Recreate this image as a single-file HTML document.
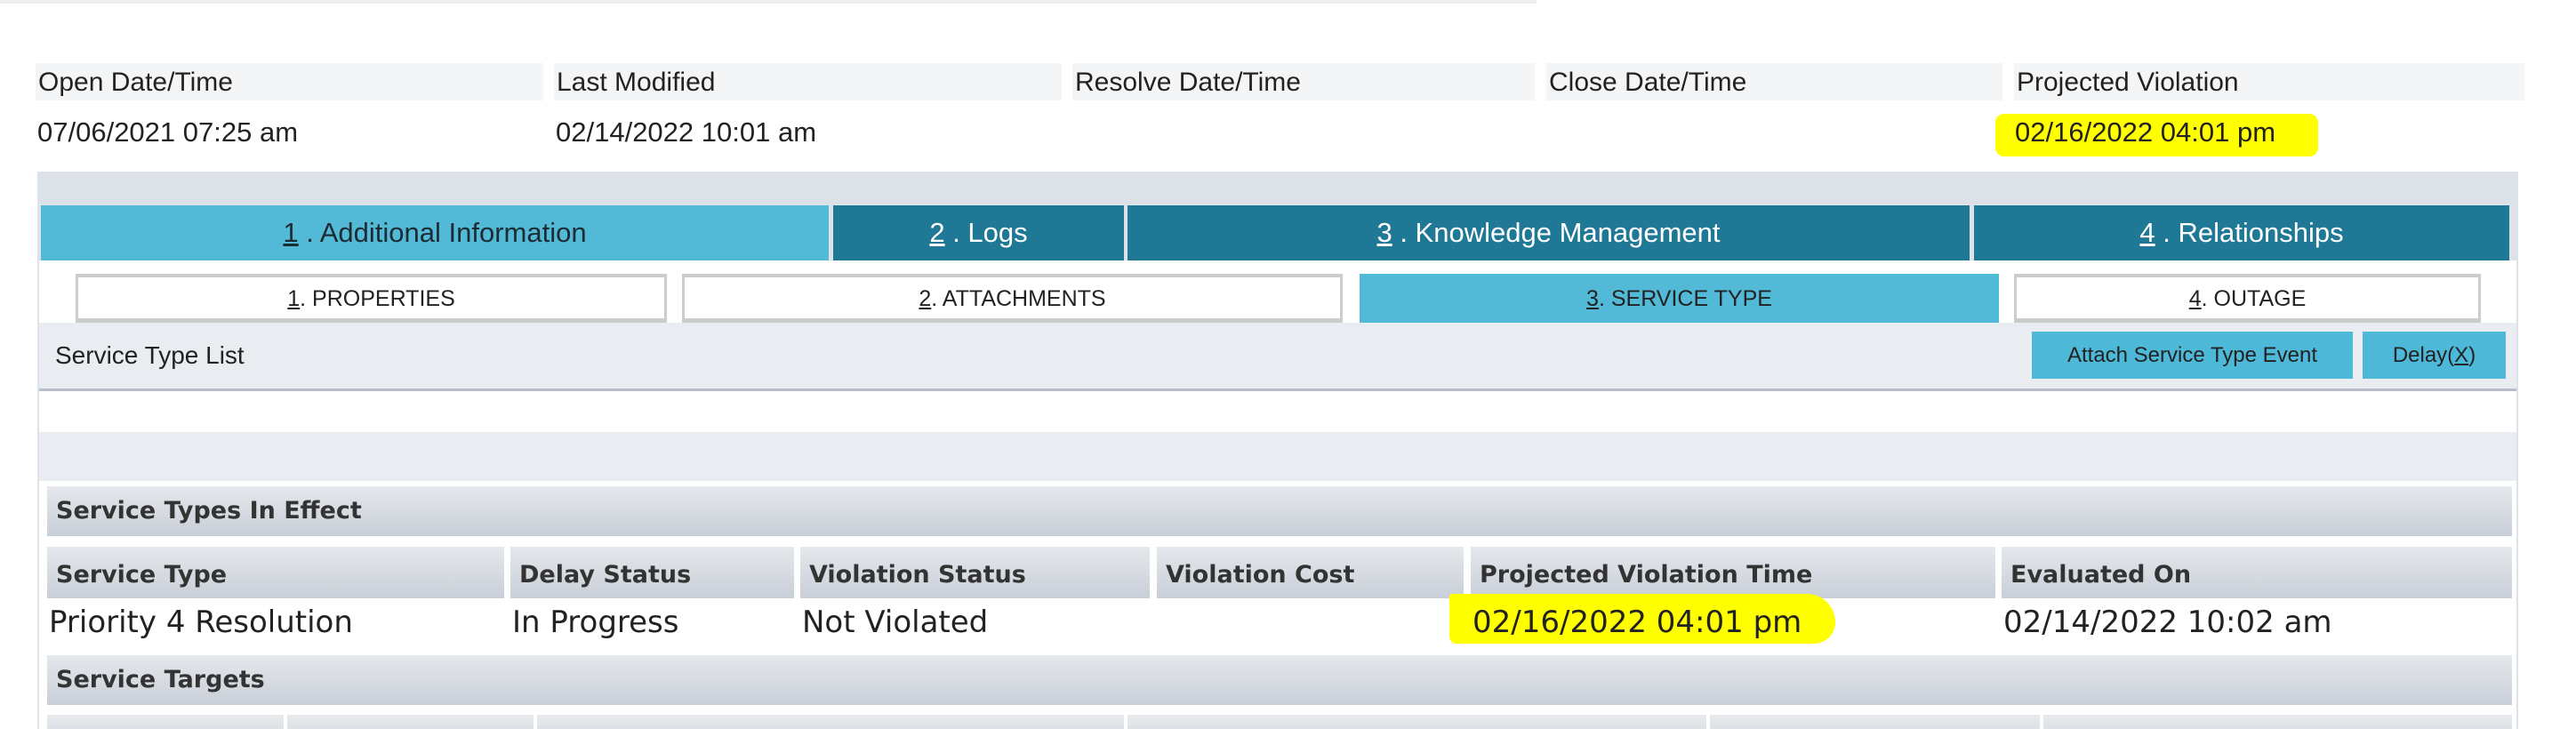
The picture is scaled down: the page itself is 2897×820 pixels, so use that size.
<!DOCTYPE html>
<html><head><meta charset="utf-8"><style>
*{margin:0;padding:0;box-sizing:border-box}
body{width:2897px;height:820px;position:relative;background:#fff;font-family:"Liberation Sans",sans-serif;color:#222;overflow:hidden}
.a{position:absolute}
.lbl{background:#f4f5f7;height:42px;font-size:30px;line-height:44px;padding-left:3px;color:#222}
.val{font-size:31px;top:131px}
.tab{top:231px;height:62px;font-size:31px;line-height:62px;text-align:center}
.tab u{text-decoration:underline}
.st{top:308px;height:55px;font-size:25px;line-height:49px;text-align:center;background:#fff;border:3px solid #ccc;border-top-width:4px;border-bottom-width:5px}
.bar{background:linear-gradient(#e5e8ec,#c9cfd8);font-family:"DejaVu Sans",sans-serif;font-weight:bold;font-size:27px;padding-left:10px;color:#333;white-space:nowrap;overflow:hidden}
.ch{top:615px;height:58px;line-height:64px}
.d{top:680px;font-size:34px;color:#222;font-family:"DejaVu Sans",sans-serif;white-space:nowrap}
.hl{background:#ffff00;border-radius:10px}
.btn{top:373px;height:53px;background:#4db8d8;font-size:24px;line-height:53px;text-align:center;color:#222}
.bc{top:804px;height:16px;background:linear-gradient(#e8eaee,#dde0e5)}
</style></head><body>
<div class="a" style="left:0;top:0;width:1728px;height:4px;background:#eeeff1"></div>

<div class="a lbl" style="left:40px;top:71px;width:571px">Open Date/Time</div>
<div class="a lbl" style="left:623px;top:71px;width:571px">Last Modified</div>
<div class="a lbl" style="left:1206px;top:71px;width:520px">Resolve Date/Time</div>
<div class="a lbl" style="left:1739px;top:71px;width:513px">Close Date/Time</div>
<div class="a lbl" style="left:2265px;top:71px;width:574px">Projected Violation</div>

<div class="a val" style="left:42px">07/06/2021 07:25 am</div>
<div class="a val" style="left:625px">02/14/2022 10:01 am</div>
<div class="a hl" style="left:2244px;top:128px;width:363px;height:48px"></div>
<div class="a val" style="left:2266px">02/16/2022 04:01 pm</div>

<div class="a" style="left:42px;top:193px;width:2790px;height:627px;background:#dde1e8"></div>
<div class="a" style="left:44px;top:293px;width:2786px;height:527px;background:#fff"></div>

<div class="a tab" style="left:46px;width:886px;background:#52b9d6;color:#1d2b33"><u>1</u> . Additional Information</div>
<div class="a tab" style="left:937px;width:327px;background:#1f7895;color:#fff"><u>2</u> . Logs</div>
<div class="a tab" style="left:1268px;width:947px;background:#1f7895;color:#fff"><u>3</u> . Knowledge Management</div>
<div class="a tab" style="left:2220px;width:602px;background:#1f7895;color:#fff"><u>4</u> . Relationships</div>

<div class="a st" style="left:85px;width:665px"><u>1</u>. PROPERTIES</div>
<div class="a st" style="left:767px;width:743px"><u>2</u>. ATTACHMENTS</div>
<div class="a st" style="left:1529px;width:719px;background:#52b9d6;border-color:#52b9d6"><u>3</u>. SERVICE TYPE</div>
<div class="a st" style="left:2265px;width:525px"><u>4</u>. OUTAGE</div>

<div class="a" style="left:44px;top:363px;width:2786px;height:77px;background:#e9ecf0;border-bottom:3px solid #b8bfc8"></div>
<div class="a" style="left:62px;top:384px;font-size:28px;color:#222">Service Type List</div>
<div class="a btn" style="left:2285px;width:361px">Attach Service Type Event</div>
<div class="a btn" style="left:2657px;width:161px">Delay(<u>X</u>)</div>

<div class="a" style="left:44px;top:486px;width:2786px;height:55px;background:#e9ecf0"></div>

<div class="a bar" style="left:53px;top:547px;width:2772px;height:56px;line-height:56px">Service Types In Effect</div>

<div class="a bar ch" style="left:53px;width:514px">Service Type</div>
<div class="a bar ch" style="left:574px;width:319px">Delay Status</div>
<div class="a bar ch" style="left:900px;width:393px">Violation Status</div>
<div class="a bar ch" style="left:1301px;width:345px">Violation Cost</div>
<div class="a bar ch" style="left:1654px;width:590px">Projected Violation Time</div>
<div class="a bar ch" style="left:2251px;width:574px">Evaluated On</div>

<div class="a hl" style="left:1630px;top:668px;width:434px;height:56px;border-radius:4px 40px 30px 10px"></div>
<div class="a d" style="left:55px">Priority 4 Resolution</div>
<div class="a d" style="left:576px">In Progress</div>
<div class="a d" style="left:902px">Not Violated</div>
<div class="a d" style="left:1656px">02/16/2022 04:01 pm</div>
<div class="a d" style="left:2253px">02/14/2022 10:02 am</div>

<div class="a bar" style="left:53px;top:737px;width:2772px;height:56px;line-height:56px">Service Targets</div>

<div class="a bc" style="left:53px;width:266px"></div>
<div class="a bc" style="left:323px;width:277px"></div>
<div class="a bc" style="left:604px;width:660px"></div>
<div class="a bc" style="left:1268px;width:651px"></div>
<div class="a bc" style="left:1923px;width:371px"></div>
<div class="a bc" style="left:2298px;width:527px"></div>
</body></html>
